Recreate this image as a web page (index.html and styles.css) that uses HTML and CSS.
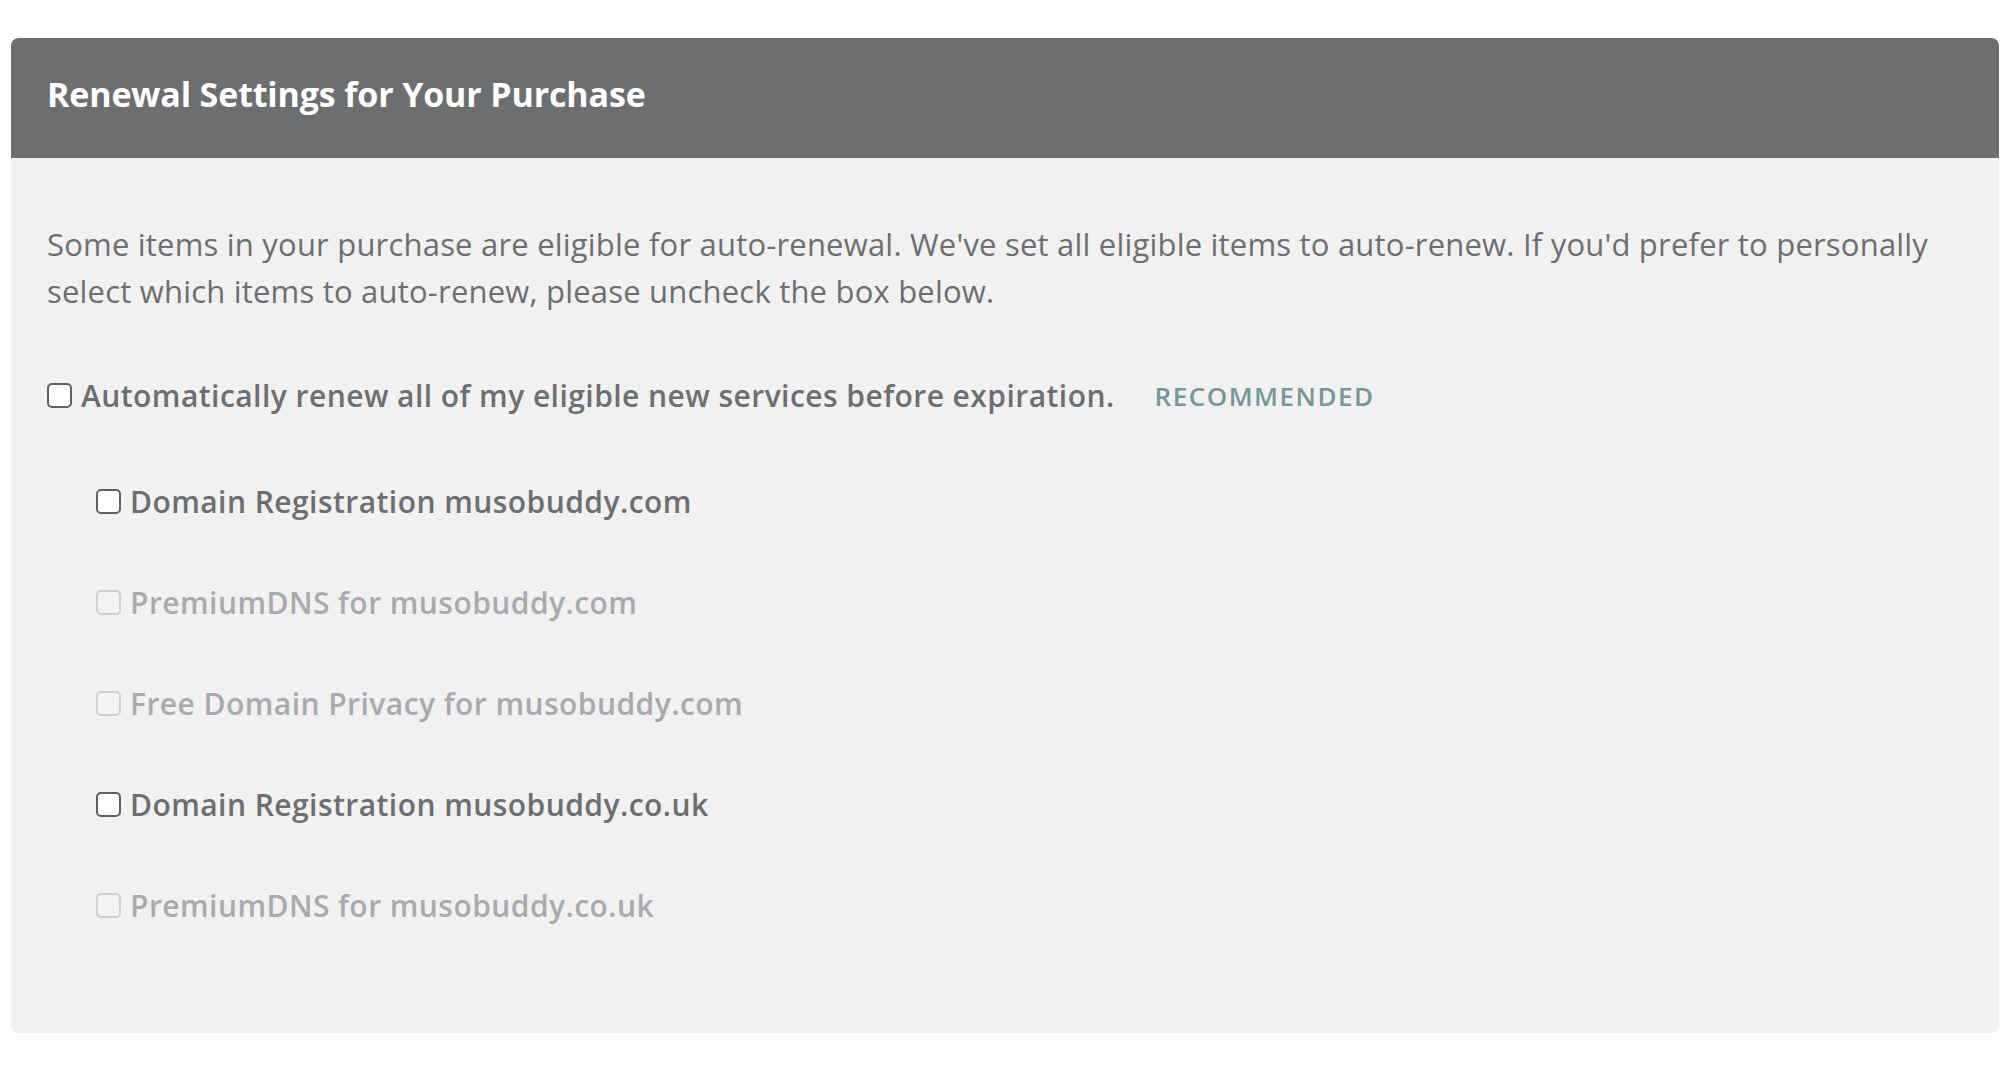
FILE: index.html
```html
<!DOCTYPE html>
<html lang="en">
<head>
<meta charset="utf-8">
<title>Renewal Settings</title>
<link rel="stylesheet" href="styles.css">
</head>
<body>
<section class="panel">
  <header class="panel-header">
    <h2 class="panel-title">Renewal Settings for Your Purchase</h2>
  </header>
  <div class="panel-body">
    <p class="intro">Some items in your purchase are eligible for auto-renewal. We've set all eligible items to auto-renew. If you'd prefer to personally select which items to auto-renew, please uncheck the box below.</p>
    <label class="row row-main">
      <input type="checkbox" class="check">
      <span class="row-label">Automatically renew all of my eligible new services before expiration.</span>
      <span class="badge">RECOMMENDED</span>
    </label>
    <ul class="items">
      <li><label class="row"><input type="checkbox" class="check"><span class="row-label">Domain Registration musobuddy.com</span></label></li>
      <li><label class="row is-disabled"><input type="checkbox" class="check" disabled><span class="row-label">PremiumDNS for musobuddy.com</span></label></li>
      <li><label class="row is-disabled"><input type="checkbox" class="check" disabled><span class="row-label">Free Domain Privacy for musobuddy.com</span></label></li>
      <li><label class="row"><input type="checkbox" class="check"><span class="row-label">Domain Registration musobuddy.co.uk</span></label></li>
      <li><label class="row is-disabled"><input type="checkbox" class="check" disabled><span class="row-label">PremiumDNS for musobuddy.co.uk</span></label></li>
    </ul>
  </div>
</section>
</body>
</html>
```
FILE: styles.css
```css
* { box-sizing: border-box; }
body {
  margin: 0;
  padding: 38px 13px 0 11px;
  background: #ffffff;
  font-family: "Open Sans", Lato, sans-serif;
  color: #6d6e70;
}
.panel {
  background: #f1f1f1;
  border-radius: 8px;
  overflow: hidden;
}
.panel-header {
  background: #6d6e70;
  height: 120px;
  padding: 0 36px 8px;
  display: flex;
  align-items: center;
}
.panel-title {
  margin: 0;
  color: #ffffff;
  font-size: 34px;
  font-weight: 700;
  letter-spacing: -0.15px;
}
.panel-body {
  padding: 63px 36px 77px;
}
.intro {
  margin: 0;
  font-size: 31px;
  line-height: 47px;
  font-weight: 400;
  letter-spacing: 0.2px;
}
.row {
  display: flex;
  align-items: center;
  height: 101px;
  gap: 9px;
}
.row-main { margin-top: 30px; }
.row-label {
  font-size: 30px;
  font-weight: 600;
  letter-spacing: 0.45px;
  color: #6d6e70;
}
.badge {
  margin-left: 31px;
  font-size: 26px;
  font-weight: 600;
  letter-spacing: 1.5px;
  color: #739896;
}
.items {
  list-style: none;
  margin: 5px 0 0;
  padding: 0 0 0 49px;
}
.check {
  appearance: none;
  -webkit-appearance: none;
  margin: 0;
  flex: none;
  width: 25px;
  height: 25px;
  border: 2px solid #5f6062;
  border-radius: 5px;
  background: #ffffff;
}
.check:disabled {
  border-color: #d0d0d2;
  background: #f3f3f3;
}
.is-disabled .row-label { color: #a9aaad; }
```
